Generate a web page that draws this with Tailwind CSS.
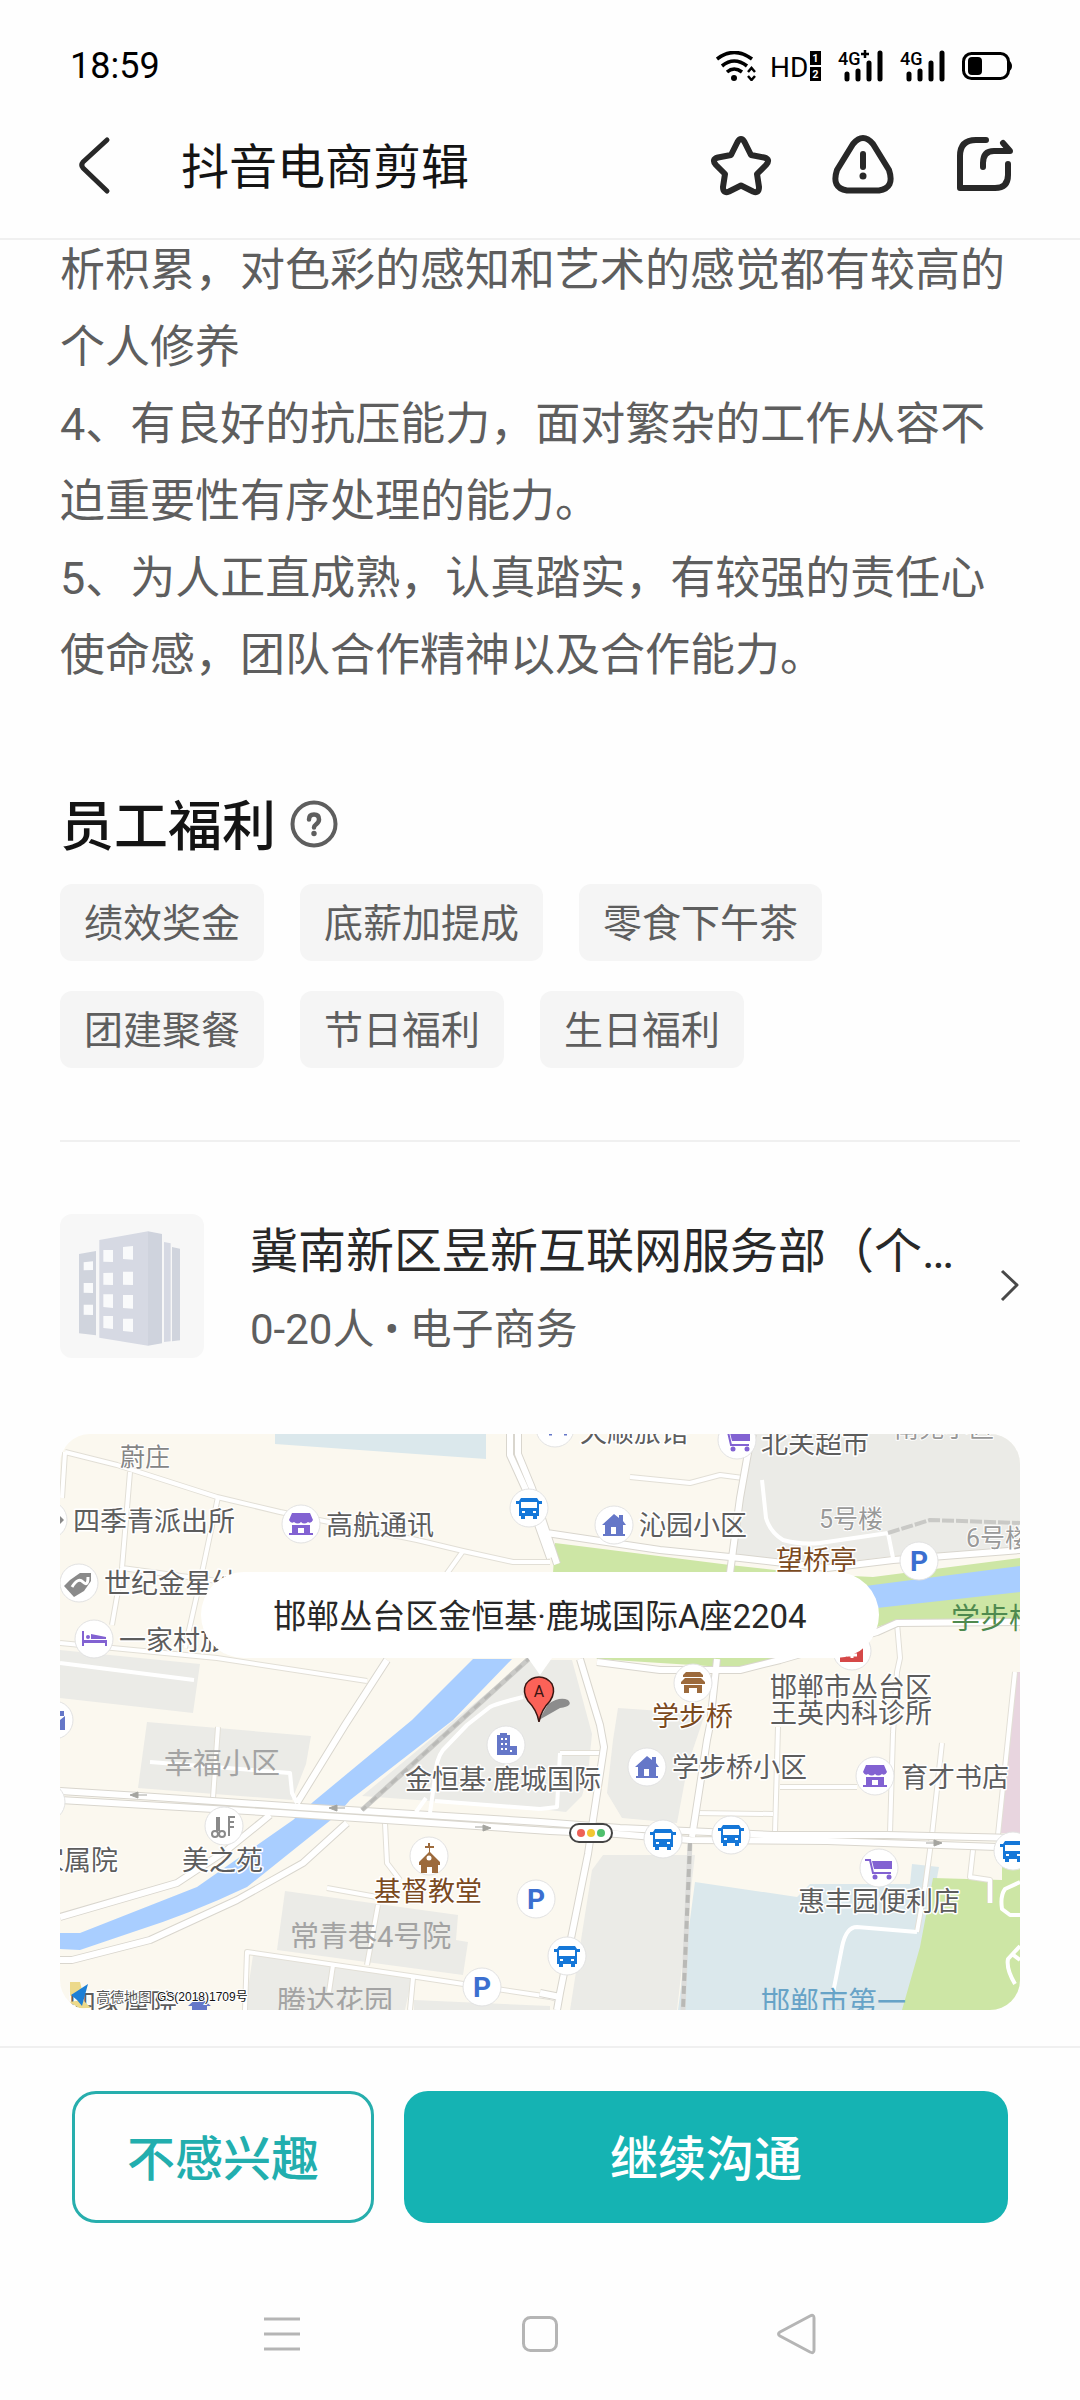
<!DOCTYPE html>
<html lang="zh-CN">
<head>
    <meta charset="UTF-8">
    <meta name="viewport" content="width=device-width, initial-scale=1.0">
    <title>抖音电商剪辑</title>
    <script src="https://cdn.jsdelivr.net/npm/@tailwindcss/browser@4"></script>
</head>
<body class="bg-[#fefefe] font-[Roboto,'Noto_Sans_CJK_SC',sans-serif] text-[#282828]">
    <!-- Status bar -->
    <div class="h-[100px] pt-8 pl-[70px] pr-[68px] flex items-center justify-between text-black">
        <span class="text-[36px] leading-none">18:59</span>
        <div class="flex items-center gap-4">
            <svg class="w-10 h-[30px]" viewBox="0 0 40 30" fill="none" stroke="#000" stroke-width="3.6">
                <path d="M1 8Q18 -5 36 8M6 15Q18 5 31 15M11 21Q18 15 26 21"/>
                <circle cx="18" cy="27" r="3" fill="#000" stroke="none"/>
                <path d="M32 21l3.500-4 3.500 4M32 25l3.500 4 3.500-4" stroke-width="2.500"/>
            </svg>
            <svg class="w-[50px] h-[30px] overflow-visible" viewBox="0 0 50 30">
                <text x="-2" y="26" font-size="28">HD</text>
                <rect x="38" y="0" width="11" height="14" fill="#000"/>
                <rect x="38" y="16" width="11" height="14" fill="#000"/>
                <text x="43.500" y="11" font-size="11" font-weight="700" fill="#fff" text-anchor="middle">1</text>
                <text x="43.500" y="27" font-size="11" font-weight="700" fill="#fff" text-anchor="middle">2</text>
            </svg>
            <svg class="w-[46px] h-[30px] overflow-visible" viewBox="0 0 46 30">
                <text x="0" y="14" font-size="18" font-weight="500">4G</text>
                <path d="M23 3h8M27 -1v8" stroke="#000" stroke-width="2.500"/>
                <path d="M9 23v5M20 20v8M31 12v16M42 2v26" stroke="#000" stroke-width="5" stroke-linecap="round"/>
            </svg>
            <svg class="w-[46px] h-[30px] overflow-visible" viewBox="0 0 46 30">
                <text x="0" y="14" font-size="18" font-weight="500">4G</text>
                <path d="M9 23v5M20 20v8M31 12v16M42 2v26" stroke="#000" stroke-width="5" stroke-linecap="round"/>
            </svg>
            <svg class="w-[50px] h-[30px]" viewBox="0 0 50 30">
                <rect x="1.500" y="2.500" width="45" height="25" rx="8" fill="none" stroke="#000" stroke-width="3"/>
                <rect x="6" y="6" width="14" height="18" rx="4" fill="#000"/>
                <path d="M46 9q4 2 4 6t-4 6z" fill="#000"/>
            </svg>
        </div>
    </div>

    <!-- Title bar -->
    <header class="h-[140px] pb-1.5 pl-[76px] pr-16 flex items-center border-b-2 border-[#f0f0f0]">
        <button type="button" aria-label="返回">
            <svg class="w-9 h-[60px]" viewBox="0 0 36 60" fill="none" stroke="#282828" stroke-width="5" stroke-linecap="round" stroke-linejoin="round">
                <path d="M31 4L7 26q-2.500 3 0 6L31 55"/>
            </svg>
        </button>
        <h1 class="pt-1 ml-[69px] text-[48px] leading-[60px] text-[#141414]">抖音电商剪辑</h1>
        <div class="ml-auto flex gap-[60px]">
            <button type="button" aria-label="收藏">
                <svg class="w-[62px] h-[62px]" viewBox="0 0 62 62" fill="none" stroke="#282828" stroke-width="6" stroke-linejoin="round">
                    <path d="M27.500 7Q31 1 34.500 7L41 20L54 22.500Q61 24.500 56 30L47 39L49 52Q49 59 43 56.500L31 50.500L19 56.500Q13 59 13 52L15 39L6 30Q1 24.500 8 22.500L21 20Z"/>
                </svg>
            </button>
            <button type="button" aria-label="举报">
                <svg class="w-[62px] h-[62px]" viewBox="0 0 62 62" fill="none" stroke="#282828" stroke-width="6" stroke-linecap="round">
                    <path d="M21 9Q31 -3 41 9L57 35Q63 53 47 55.500H15Q-1 53 5 35Z"/>
                    <path d="M31 19v13"/>
                    <circle cx="31" cy="41" r="3.500" fill="#282828" stroke="none"/>
                </svg>
            </button>
            <button type="button" aria-label="分享">
                <svg class="w-[62px] h-[62px]" viewBox="0 0 62 62" fill="none" stroke="#282828" stroke-width="6" stroke-linecap="round" stroke-linejoin="round">
                    <path d="M32 5H22Q6 5 6 21V53H41Q54 53 54 40V29"/>
                    <path d="M29 32V28Q29 16 40 16H56L49 8"/>
                </svg>
            </button>
        </div>
    </header>

    <main class="px-[60px] overflow-hidden">
        <div class="-mt-2 text-[45px] leading-[77px] text-[#5e5e5e]">
            <p>析积累，对色彩的感知和艺术的感觉都有较高的个人修养</p>
            <p>4、有良好的抗压能力，面对繁杂的工作从容不迫重要性有序处理的能力。</p>
            <p>5、为人正直成熟，认真踏实，有较强的责任心使命感，团队合作精神以及合作能力。</p>
        </div>

        <!-- Benefits -->
        <section class="mt-[98px] pb-[72px] border-b-2 border-[#f0f0f0]">
            <div class="flex items-center gap-[14px]">
                <h2 class="pt-2 text-[54px] leading-[56px] font-medium text-[#141414]">员工福利</h2>
                <button type="button" aria-label="福利说明">
                    <svg class="w-12 h-12" viewBox="0 0 48 48" fill="none" stroke="#5e5e5e" stroke-width="4" stroke-linecap="round">
                        <circle cx="24" cy="24" r="21.500"/>
                        <path d="M19 19.500Q19 14.500 24 14.500T29 19.500Q29 22 26.500 24T24 27.500" stroke-width="4.500"/>
                        <circle cx="24" cy="33.500" r="2.700" fill="#5e5e5e" stroke="none"/>
                    </svg>
                </button>
            </div>
            <ul class="mt-7 flex flex-wrap gap-x-9 gap-y-[30px] text-[39px] leading-[73px] text-[#5e5e5e]">
                <li class="px-6 pt-1 rounded-xl bg-[#f5f5f5]">绩效奖金</li>
                <li class="px-6 pt-1 rounded-xl bg-[#f5f5f5]">底薪加提成</li>
                <li class="px-6 pt-1 rounded-xl bg-[#f5f5f5]">零食下午茶</li>
                <li class="px-6 pt-1 rounded-xl bg-[#f5f5f5]">团建聚餐</li>
                <li class="px-6 pt-1 rounded-xl bg-[#f5f5f5]">节日福利</li>
                <li class="px-6 pt-1 rounded-xl bg-[#f5f5f5]">生日福利</li>
            </ul>
        </section>

        <!-- Company -->
        <a href="#" class="mt-[72px] flex items-center">
            <svg class="w-36 h-36 shrink-0 rounded-xl" viewBox="0 0 432 432">
                <rect width="432" height="432" fill="#f7f7f7"/>
                <path d="M57 120L108 111V364L57 358Z" fill="#d0d4dd"/>
                <path d="M118 78L264 52V395L118 371Z" fill="#d6d9e3"/>
                <path d="M264 52L306 60V388L264 395Z" fill="#cfd3dd"/>
                <path d="M312 84L332 88V382L312 384Z" fill="#d6d9e3"/>
                <path d="M336 99L360 104V379L336 382Z" fill="#d0d4dd"/>
                <path d="M71 145l28-3v26l-28 1zM71 207h28v30l-28-1zM71 272h28v31l-28-1zM130 108h29v36l-29-1zM189 99l30-3v41l-30-2zM130 177l29-1v37l-29-1zM189 173h30v40l-30-1zM130 241h29v41l-29-3zM189 243h30v41l-30-2zM130 306h29v39l-29-3zM189 314h30v40l-30-3z" fill="#f9fafb"/>
            </svg>
            <div class="ml-[46px] pt-0.5 min-w-0">
                <h3 class="text-[48px] leading-[72px] truncate">冀南新区昱新互联网服务部（个…</h3>
                <p class="mt-3.5 text-[42px] leading-[56px] text-[#5e5e5e]">0-20人 • 电子商务</p>
            </div>
            <svg class="ml-auto w-6 h-9" viewBox="0 0 24 36" fill="none" stroke="#484848" stroke-width="3" stroke-linejoin="round">
                <path d="M6 3L21 17L6 32"/>
            </svg>
        </a>

        <!-- Map -->
        <div class="relative mt-[76px] rounded-[30px] overflow-hidden">
            <svg class="block w-full h-auto" viewBox="0 0 960 576">
                <defs>
                    <g id="lanes">
                        <path d="M5 18L57 31L157 63L220 78L357 106L403 117L453 128H490M70 38L62 134L52 191M158 63L143 134L125 214M62 134L180 150M5 18L2 64M0 209L157 224L307 247M403 117L383 145"/>
                        <path d="M570 43L630 49L660 41L683 44M833 299L830 399M837 189L840 224L837 238L833 299M718 293L715 399M720 353H797M882 309L872 401L865 453L857 498M938 401L955 238M635 379L713 380M913 416L910 443L930 446V469"/>
                        <path d="M318 471L307 531M273 531L269 558M353 544L350 576M267 454L317 463M185 576L187 518L357 543L490 563L500 566M158 293L153 364M325 389L327 429L340 446M543 319H500"/>
                    </g>
                    <g id="streets">
                        <path d="M450 0V21L465 54L490 124M458 0V20L472 54L497 130M327 226L285 291L237 369M480 98L600 116L680 124L767 134L833 126L960 116M693 0L688 19L680 64L670 139M657 225L650 291L647 306L632 403"/>
                        <path d="M520 225L540 291L544 313L533 386L528 420L500 559L497 576M480 559L500 563M537 228L600 236H680L720 226L817 198L837 189L960 188M0 483L117 449L167 416L210 381M0 526H12L90 506L177 466L243 429L287 389"/>
                        <path d="M0 357L80 362L240 373L480 388L560 394L713 401H827L960 404M0 366L220 379L490 397L557 400L630 406L767 407L937 413"/>
                    </g>
                    <g id="bus">
                        <circle r="19" fill="#fff" stroke="#e2e2e2"/>
                        <path d="M-13 -4V-7H-10L-8 -10H8L10 -7H13V-4H10V8H8V11H4V8H-4V11H-8V8H-10V-4Z" fill="#1577d8"/>
                        <path d="M-8 -6H8V0H-8Z" fill="#fff"/>
                        <path d="M-7 4h3M4 4h3" stroke="#fff" stroke-width="2"/>
                    </g>
                    <g id="shop">
                        <circle r="19" fill="#fff" stroke="#e2e2e2"/>
                        <path d="M-9 -11H9L12 -4Q10 0 7 -2Q3 1 0 -2Q-3 1 -7 -2Q-10 0 -12 -4ZM-9 1H9V9H12V11H-12V9H-9ZM-3 4V9H3V4Z" fill="#8262d2" fill-rule="evenodd"/>
                    </g>
                    <g id="house">
                        <circle r="19" fill="#fff" stroke="#e2e2e2"/>
                        <path d="M-12 0L0 -11L5 -7V-10H9V-4L12 0H9V9H11V11H-11V9H-9V0ZM-3 9H2V2H-3Z" fill="#6577c8" fill-rule="evenodd"/>
                    </g>
                    <g id="cart">
                        <circle r="19" fill="#fff" stroke="#e2e2e2"/>
                        <path d="M-14 -8H-9L-6 5H12" fill="none" stroke="#8262d2" stroke-width="2"/>
                        <path d="M-7 -7H13V1H-5Z" fill="#8262d2"/>
                        <circle cx="-4" cy="9" r="2.500" fill="#8262d2"/>
                        <circle cx="10" cy="9" r="2.500" fill="#8262d2"/>
                    </g>
                    <g id="parking">
                        <circle r="19" fill="#fff" stroke="#e2e2e2"/>
                        <text y="10" font-size="28" font-weight="700" fill="#3b6fd0" text-anchor="middle">P</text>
                    </g>
                </defs>

                <rect width="960" height="576" fill="#fbf8ef"/>

                <!-- blocks -->
                <g fill="#ebebe7">
                    <path d="M693 0H960V114L833 122L767 130L673 122Z"/>
                    <path d="M0 216L140 230L133 279L0 264Z"/>
                    <path d="M87 288L251 302L246 330L232 366L78 354Z"/>
                    <path d="M225 457L398 481L396 506L408 508L403 541L217 516Z"/>
                    <path d="M193 521L352 544L345 576H185Z"/>
                    <path d="M354 566L490 572V576H354Z"/>
                    <path d="M467 226H512L532 300L528 340L522 362L506 378L480 375L302 362Z"/>
                    <path d="M558 274L645 280L628 330L617 389L562 384L547 359L553 306Z"/>
                    <path d="M532 436L543 421H635L617 576H510Z"/>
                </g>
                <path d="M215 0H426V25L215 10Z" fill="#dbe8ec"/>
                <path d="M635 448L737 463L750 450H850L852 430L879 433L877 444L860 576H618Z" fill="#dbe8ec"/>
                <path d="M873 444L942 446V433H960V576H842L860 513Z" fill="#cde6a5"/>
                <path d="M495 109L670 131L750 140L813 143L960 124V189L837 187L680 234L537 225L493 139Z" fill="#cde6a5"/>
                <path d="M955 238H960V399H938Z" fill="#e8d5df"/>
                <path d="M760 158L813 151L960 132V158L817 174L760 180Z" fill="#a9ceff"/>
                <path d="M413 225H452L393 286L290 366L277 381L187 453Q130 480 73 498L20 516L0 515V499H20L137 453L233 386L253 368L352 286Z" fill="#a9ceff"/>

                <!-- roads -->
                <g fill="none" stroke-linejoin="round">
                    <use href="#lanes" stroke="#e2dfd6" stroke-width="6"/>
                    <use href="#lanes" stroke="#fff" stroke-width="4"/>
                    <use href="#streets" stroke="#d9d6ce" stroke-width="8"/>
                    <use href="#streets" stroke="#fff" stroke-width="6"/>
                    <path d="M702 46L706 84Q710 98 723 106Q740 111 760 109L828 99L833 124M463 263Q435 270 430 273L407 291L383 316Q376 325 375 343L370 379M366 364L356 378M500 319L497 373L480 375M375 367L480 375M0 229L134 246M90 328L230 339L232 359L237 369M773 559L782 513Q786 493 797 493L857 498" stroke="#fff" stroke-width="4"/>
                    <path d="M960 448L945 455Q940 462 942 475L950 481H960M960 512L948 525Q946 535 955 550M952 520L960 526" stroke="#fff" stroke-width="4"/>
                    <path d="M472 222L302 376" stroke="#c9c9c6" stroke-width="5"/>
                    <path d="M472 222L302 376" stroke="#b9b9b6" stroke-width="3" stroke-dasharray="8 6"/>
                    <path d="M828 99L870 86L960 89" stroke="#c9c9c6" stroke-width="4" stroke-dasharray="12 2"/>
                    <path d="M630 409L623 576" stroke="#dcdcda" stroke-width="5"/>
                    <path d="M630 409L623 576" stroke="#b9b9b6" stroke-width="4" stroke-dasharray="8 5"/>
                </g>
                <g fill="#a5a5a0" stroke="#a5a5a0">
                    <path d="M70 361L78 358V364ZM78 361H87M269 374L277 371V377ZM277 374H285M431 394L423 391V397ZM423 393H415M882 409L874 406V412ZM874 409H866"/>
                </g>

                <!-- points of interest -->
                <use href="#bus" x="469" y="74"/>
                <use href="#bus" x="603" y="405"/>
                <use href="#bus" x="671" y="401"/>
                <use href="#bus" x="953" y="417"/>
                <use href="#bus" x="507" y="522"/>
                <use href="#shop" x="241" y="90"/>
                <use href="#shop" x="815" y="342"/>
                <use href="#house" x="554" y="91"/>
                <use href="#house" x="587" y="333"/>
                <use href="#cart" x="677" y="6"/>
                <use href="#cart" x="819" y="434"/>
                <use href="#parking" x="859" y="127"/>
                <use href="#parking" x="476" y="465"/>
                <use href="#parking" x="422" y="553"/>
                <g fill="#fff" stroke="#e2e2e2">
                    <circle cx="495" cy="-6" r="19"/>
                    <circle cx="-12" cy="86" r="19"/>
                    <circle cx="-6" cy="286" r="19"/>
                    <circle cx="-14" cy="368" r="19"/>
                    <circle cx="19" cy="149" r="19"/>
                    <circle cx="34" cy="205" r="19"/>
                    <circle cx="792" cy="217" r="19"/>
                    <circle cx="633" cy="249" r="19"/>
                    <circle cx="446" cy="311" r="19"/>
                    <circle cx="164" cy="392" r="19"/>
                    <circle cx="369" cy="422" r="19"/>
                </g>
                <path d="M0 82L4 86L0 90Z" fill="#8a8a8a"/>
                <path d="M0 277H4V282H0M0 286L5 282V296H0" fill="#6577c8"/>
                <path d="M489 0h3M504 0h3" stroke="#6577c8" stroke-width="3"/>
                <path d="M4 152L10 146L20 139L31 139L31 147L24 157L14 163Z" fill="#8a8a8a"/>
                <path d="M12 153Q18 143 23 148T28 143" fill="none" stroke="#fff" stroke-width="3"/>
                <path d="M22 197H24V206H47V212H45V209H24V212H22ZM31 205V200L46 203V205Z" fill="#8262d2"/>
                <circle cx="28" cy="203" r="2" fill="#8262d2"/>
                <path d="M780 214H803V228H780Z" fill="#d54848"/>
                <path d="M792 214v10M787 221h10" stroke="#fff" stroke-width="3"/>
                <path d="M623 241L626 238H640L643 241V243H623ZM621 248L625 244H641L645 248V250H621ZM624 251H642V259H637V254H629V259H624Z" fill="#9c6a3c"/>
                <path d="M437 321V301H440V299H447V301H450V312H457V321Z" fill="#6577c8"/>
                <path d="M441 305h2M445 305h2M441 310h2M445 310h2M441 315h2M445 315h2M450 317h2" stroke="#fff" stroke-width="2"/>
                <g fill="none" stroke="#8a8a8a" stroke-width="2">
                    <circle cx="155" cy="400" r="3"/>
                    <circle cx="162" cy="400" r="3"/>
                    <path d="M158 383V397" stroke-width="4"/>
                    <path d="M169 402V383H175M169 388H174M169 393H174"/>
                </g>
                <path d="M368 409h2v3h4v2h-4v4l10 10v3h-2v8h-6v-6h-5v6h-6v-8h-2v-3l10-10v-4h-4v-2h3z" fill="#9c6a3c"/>
                <circle cx="369" cy="424" r="2.500" fill="#fff"/>
                <rect x="510" y="390" width="42" height="18" rx="9" fill="#fff" stroke="#444" stroke-width="2"/>
                <circle cx="521" cy="399" r="4" fill="#ee6158"/>
                <circle cx="531" cy="399" r="4" fill="#f3c632"/>
                <circle cx="541" cy="399" r="4" fill="#4fc06e"/>
                <path d="M128 572L139 562L151 572H147V576H132V572Z" fill="#6577c8"/>

                <!-- labels -->
                <g fill="#5d5d5d" font-size="27" stroke="#fff" stroke-width="3" stroke-linejoin="round" paint-order="stroke">
                    <text x="13" y="97">四季青派出所</text>
                    <text x="266" y="101">高航通讯</text>
                    <text x="579" y="101">沁园小区</text>
                    <text x="701" y="19">北关超市</text>
                    <text x="520" y="8">天顺旅馆</text>
                    <text x="44" y="159">世纪金星幼</text>
                    <text x="59" y="216">一家村旅</text>
                    <text x="710" y="263">邯郸市丛台区</text>
                    <text x="710" y="289">王英内科诊所</text>
                    <text x="345" y="355">金恒基·鹿城国际</text>
                    <text x="612" y="343">学步桥小区</text>
                    <text x="841" y="353">育才书店</text>
                    <text x="738" y="477">惠丰园便利店</text>
                    <text x="-23" y="436">家属院</text>
                    <text x="122" y="436">美之苑</text>
                    <text x="9" y="580">四家属院</text>
                    <g fill="#7b4a1e">
                        <text x="716" y="136">望桥亭</text>
                        <text x="592" y="292">学步桥</text>
                        <text x="314" y="467">基督教堂</text>
                    </g>
                </g>
                <g fill="#999" font-size="25" stroke="#fff" stroke-width="2" stroke-linejoin="round" paint-order="stroke">
                    <text x="60" y="32" fill="#858585">蔚庄</text>
                    <text x="759" y="94">5号楼</text>
                    <text x="906" y="113">6号楼</text>
                    <text x="834" y="3">南苑小区</text>
                </g>
                <g fill="#a3a3a3" font-size="29">
                    <text x="104" y="340">幸福小区</text>
                    <text x="230" y="513">常青巷4号院</text>
                    <text x="217" y="578">腾达花园</text>
                    <text x="891" y="195" fill="#4f8a4f">学步桥</text>
                    <text x="701" y="579" fill="#67a3c7">邯郸市第一</text>
                </g>

                <!-- copyright -->
                <path d="M10 548h10l2 8-12 6zM9 568l10 6h12l-8-8z" fill="#ecd98a"/>
                <path d="M11 561L28 550L22 572L17 566Z" fill="#1b7fd6"/>
                <text x="36" y="568" font-size="14" fill="#555" stroke="#fff" stroke-width="2" paint-order="stroke">高德地图</text>
                <text x="97" y="567" font-size="12" fill="#111" stroke="#fff" stroke-width="2" paint-order="stroke" font-family="Liberation Sans, Noto Sans CJK SC, sans-serif">GS(2018)1709号</text>

                <!-- pin -->
                <path d="M479 286L488 270Q500 262 508 266Q514 272 500 274Z" fill="#8c8c8c"/>
                <path d="M479 288Q477 276 468 267Q462 258 466 250Q471 243 479 243T492 250Q496 258 490 267Q481 276 479 288Z" fill="#fb6258" stroke="#3a1512" stroke-width="1.500"/>
                <text x="479" y="263" font-size="16" fill="#3a1512" text-anchor="middle">A</text>
            </svg>
            <div class="absolute inset-x-0 top-[24%] flex flex-col items-center">
                <p class="px-[72px] pt-1 rounded-full bg-white text-[33px] leading-[82px] whitespace-nowrap">邯郸丛台区金恒基·鹿城国际A座2204</p>
                <svg class="w-10 h-[17px]" viewBox="0 0 40 17"><path d="M8 0H32L20 17Z" fill="#fff"/></svg>
            </div>
        </div>
    </main>

    <!-- Actions -->
    <div class="mt-9 pt-[43px] px-[72px] grid grid-cols-[1fr_2fr] gap-[30px] border-t-2 border-[#f0f0f0] text-[48px] font-medium">
        <button type="button" class="h-[132px] pt-1.5 rounded-3xl border-3 border-[#27aead] text-[#22aeae]">不感兴趣</button>
        <button type="button" class="h-[132px] pt-1.5 rounded-3xl bg-[#15b3b3] text-white">继续沟通</button>
    </div>

    <!-- System navigation -->
    <nav class="mt-[89px] mb-10 px-[153px] grid grid-cols-3 justify-items-center">
        <button type="button" aria-label="最近任务">
            <svg class="w-11 h-11" viewBox="0 0 44 44" stroke="#b5b5b5" stroke-width="3"><path d="M4 7H40M4 22H40M4 37H40"/></svg>
        </button>
        <button type="button" aria-label="主屏幕">
            <svg class="w-11 h-11" viewBox="0 0 44 44" fill="none" stroke="#b5b5b5" stroke-width="3"><rect x="5.500" y="5.500" width="33" height="33" rx="7"/></svg>
        </button>
        <button type="button" aria-label="返回上一页">
            <svg class="w-11 h-11" viewBox="0 0 44 44" fill="none" stroke="#b5b5b5" stroke-width="3" stroke-linejoin="round"><path d="M4 20L34 4Q38 2 38 6V38Q38 42 34 40L4 24Q1 22 4 20Z"/></svg>
        </button>
    </nav>
</body>
</html>
